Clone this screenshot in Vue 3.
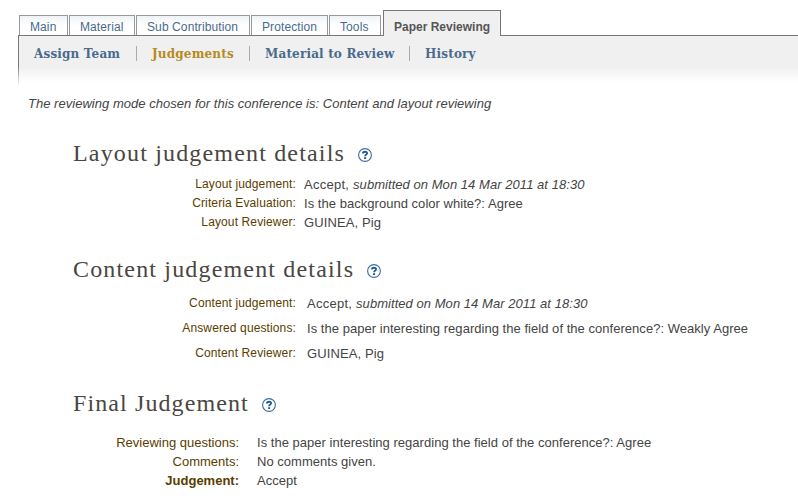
<script setup>
const tabs = [
  { label: 'Main', key: 'main' },
  { label: 'Material', key: 'material' },
  { label: 'Sub Contribution', key: 'sub' },
  { label: 'Protection', key: 'protection' },
  { label: 'Tools', key: 'tools' },
  { label: 'Paper Reviewing', key: 'paper', active: true },
]
const subTabs = [
  { label: 'Assign Team', key: 'assign' },
  { label: 'Judgements', key: 'judgements', active: true },
  { label: 'Material to Review', key: 'review' },
  { label: 'History', key: 'history' },
]
const sections = [
  {
    key: 'layout',
    title: 'Layout judgement details',
    rows: [
      { label: 'Layout judgement:', value: 'Accept, ', note: 'submitted on Mon 14 Mar 2011 at 18:30' },
      { label: 'Criteria Evaluation:', value: 'Is the background color white?: Agree' },
      { label: 'Layout Reviewer:', value: 'GUINEA, Pig', person: true },
    ],
  },
  {
    key: 'content',
    title: 'Content judgement details',
    rows: [
      { label: 'Content judgement:', value: 'Accept, ', note: 'submitted on Mon 14 Mar 2011 at 18:30' },
      { label: 'Answered questions:', value: 'Is the paper interesting regarding the field of the conference?: Weakly Agree' },
      { label: 'Content Reviewer:', value: 'GUINEA, Pig', person: true },
    ],
  },
  {
    key: 'final',
    title: 'Final Judgement',
    rows: [
      { label: 'Reviewing questions:', value: 'Is the paper interesting regarding the field of the conference?: Agree' },
      { label: 'Comments:', value: 'No comments given.' },
      { label: 'Judgement:', value: 'Accept', strong: true },
    ],
  },
]
</script>

<template>
  <div class="page">
    <nav class="tabs">
      <a v-for="t in tabs" :key="t.key" class="tab" :class="['tab-' + t.key, { active: t.active }]">{{ t.label }}</a>
    </nav>
    <div class="panel">
      <nav class="subtabs">
        <a v-for="s in subTabs" :key="s.key" class="subtab" :class="['subtab-' + s.key, { current: s.active }]">{{ s.label }}</a>
      </nav>
    </div>
    <p class="mode">The reviewing mode chosen for this conference is: Content and layout reviewing</p>
    <section v-for="s in sections" :key="s.key" class="section" :class="s.key">
      <h2 class="title">
        <span>{{ s.title }}</span>
        <svg class="help" width="14" height="14" viewBox="0 0 14 14">
          <circle cx="7" cy="7" r="6.4" fill="#fff" stroke="#3a6ea5" stroke-width="1.1" />
          <path d="M4.9 5.5C4.9 3.2 9.1 3.2 9.1 5.3C9.1 6.6 7.1 6.6 7.1 8.3" fill="none" stroke="#22598f" stroke-width="1.8" />
          <rect x="6.1" y="9.2" width="2" height="1.8" fill="#22598f" />
        </svg>
      </h2>
      <div v-for="r in s.rows" :key="r.label" class="row">
        <span class="label" :class="{ strong: r.strong }">{{ r.label }}</span>
        <span class="value" :class="{ noted: r.note, person: r.person }">{{ r.value }}<em v-if="r.note">{{ r.note }}</em></span>
      </div>
    </section>
  </div>
</template>

<style>
body {
  background: #fff;
}
</style>

<style scoped>
.page {
  width: 798px;
  height: 504px;
  box-sizing: border-box;
  padding: 10px 0 0 18px;
  overflow: hidden;
  background: #fff;
  font-family: "Liberation Sans", Arial, sans-serif;
  font-size: 13px;
  color: #444;
}
.tabs {
  display: flex;
  align-items: flex-end;
  gap: 1px;
  height: 25px;
  padding-left: 1px;
}
.tab {
  box-sizing: border-box;
  height: 20px;
  border: 1px solid #999;
  border-bottom: 0;
  padding-left: 10px;
  background: linear-gradient(#f0f3f5, #fff 10px);
  color: #4a6a8c;
  font-size: 12px;
  letter-spacing: 0.1px;
  line-height: 22px;
  white-space: nowrap;
}
.tab-main { width: 49px; }
.tab-material { width: 66px; }
.tab-sub { width: 114px; }
.tab-protection { width: 77px; }
.tab-tools { width: 52px; }
.tab-paper { width: 118px; margin-left: 1px; }
.tab.active {
  position: relative;
  height: 26px;
  margin-bottom: -1px;
  border-color: #777;
  background: #f0f0f0;
  color: #555;
  font-weight: bold;
  letter-spacing: 0;
  line-height: 32px;
}
.panel {
  box-sizing: border-box;
  height: 51px;
  border-top: 1px solid #777;
  padding-left: 1px;
  background:
    linear-gradient(#777 30px, #fff 50px) left top / 1px 50px no-repeat,
    linear-gradient(#f0f0f0 31px, #fff 46px);
}
.subtabs {
  display: flex;
  padding-top: 10px;
}
.subtab {
  box-sizing: border-box;
  height: 15px;
  padding-left: 15px;
  color: #4a6a8c;
  font-family: "DejaVu Serif", serif;
  font-weight: bold;
  font-size: 12px;
  line-height: 17px;
  letter-spacing: 0.17px;
  white-space: nowrap;
}
.subtab + .subtab { border-left: 1px solid #aaa; }
.subtab-assign { width: 117px; }
.subtab-judgements { width: 113px; }
.subtab-review { width: 160px; }
.subtab.current { color: #b58b22; }
.mode {
  margin: 10px 0 0 10px;
  font-style: italic;
  letter-spacing: 0.028px;
  line-height: 15px;
}
.section { padding-left: 55px; }
.title {
  display: flex;
  align-items: center;
  gap: 13px;
  height: 28px;
  margin: 0;
  color: #4a4641;
  font-family: "Liberation Serif", "Times New Roman", serif;
  font-size: 24px;
  font-weight: normal;
  letter-spacing: 1.17px;
  line-height: 28px;
  white-space: nowrap;
}
.help { margin-top: 3px; }
.row {
  display: flex;
  height: 19px;
  line-height: 19px;
  white-space: nowrap;
}
.label {
  width: 223px;
  color: #5a3d00;
  font-size: 12px;
  letter-spacing: 0.12px;
  line-height: 18px;
  text-align: right;
}
.value {
  margin-left: 8px;
  letter-spacing: 0.035px;
}
.value.noted { letter-spacing: 0.26px; }
.value.person { letter-spacing: 0.12px; }
.value em { letter-spacing: 0.05px; }
.layout { margin-top: 28px; }
.layout .title { margin-bottom: 8px; }
.content { margin-top: 23px; }
.content .title { margin-bottom: 8px; }
.content .row {
  height: 25px;
  line-height: 25px;
}
.content .label { line-height: 24px; }
.content .value { margin-left: 11px; }
.final { margin-top: 23px; }
.final .title {
  margin-bottom: 16px;
  letter-spacing: 1.1px;
}
.final .label {
  width: 166px;
  font-size: 13px;
  letter-spacing: 0;
  line-height: 19px;
}
.final .value {
  margin-left: 18px;
  letter-spacing: 0.025px;
}
.label.strong { font-weight: bold; }
</style>
